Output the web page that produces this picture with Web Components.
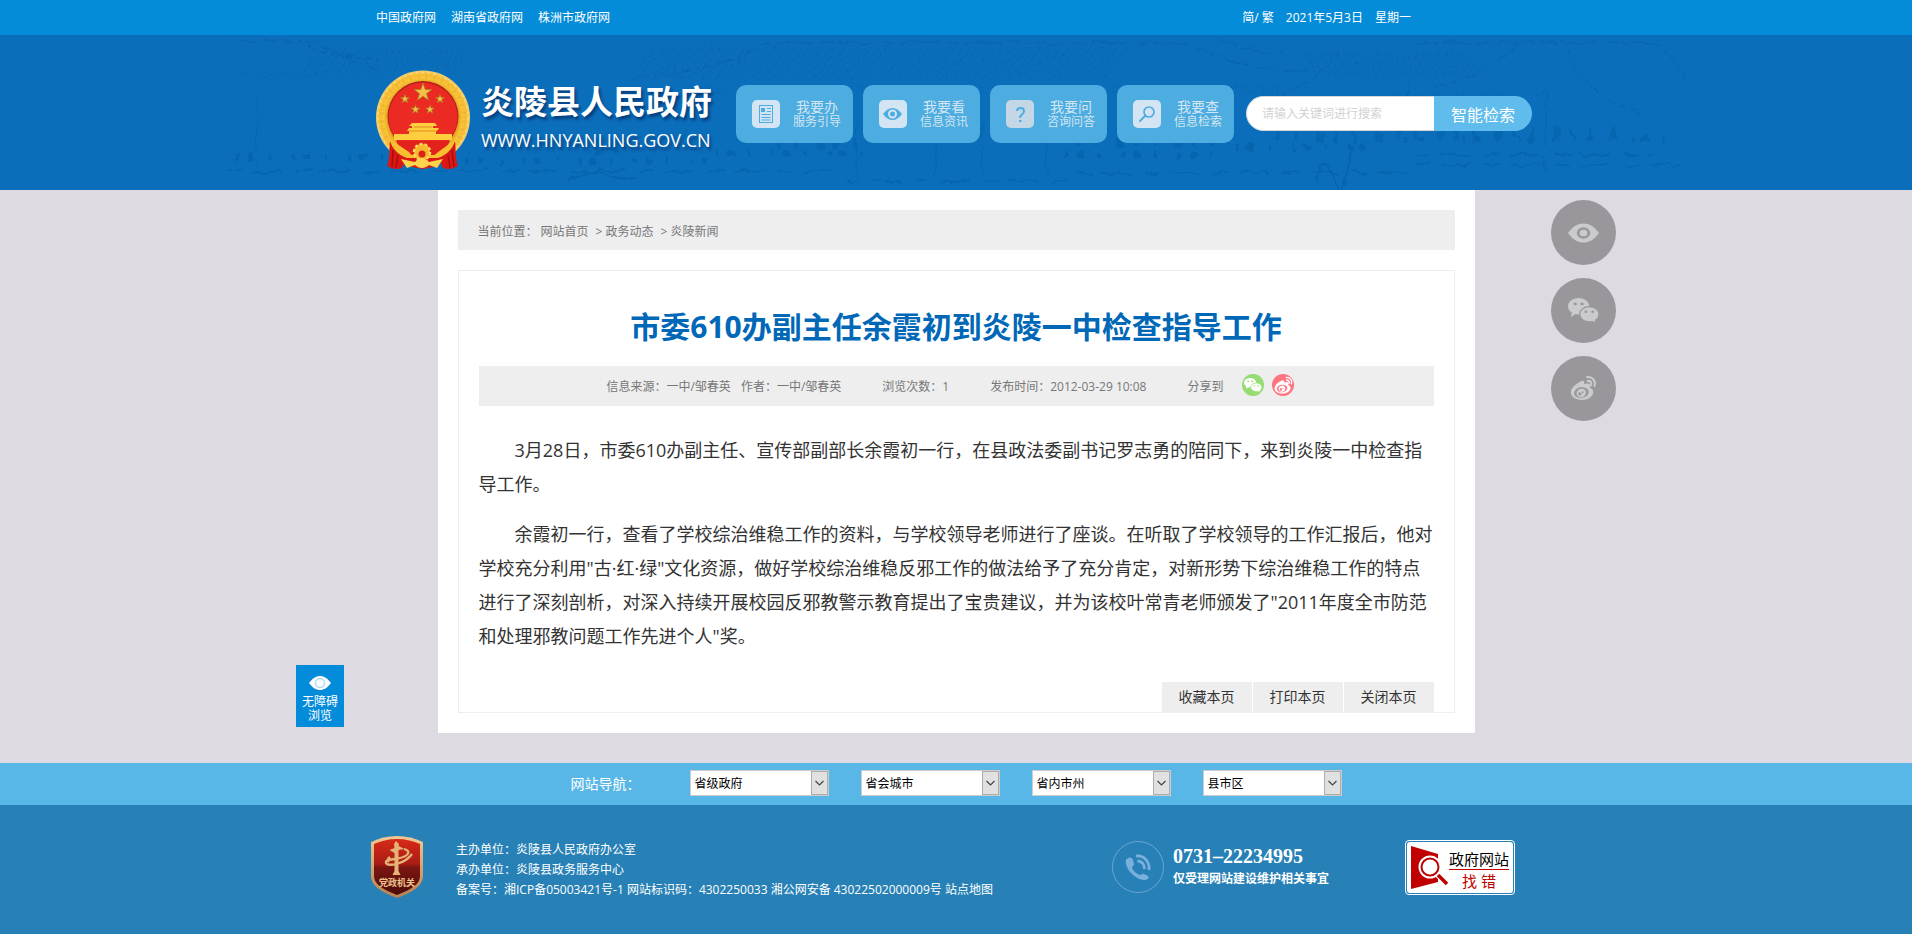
<!DOCTYPE html>
<html lang="zh-CN">
<head>
<meta charset="utf-8">
<meta name="viewport" content="width=device-width, initial-scale=1">
<title>市委610办副主任余霞初到炎陵一中检查指导工作</title>
<style>
:root { --wrap: 1160px; --sans: "Open Sans", "Noto Sans CJK SC", sans-serif; }
body {
  margin: 0; min-height: 100vh; display: flex; flex-direction: column;
  background: #dddbe1; color: #333;
  font: 12px/20px var(--sans); text-spacing-trim: space-all;
}
top-bar a { color: #fff; text-decoration: none; }
news-article p { margin: 0 0 16px; text-indent: 2em; }
</style>
</head>
<body>
<top-bar>
  <a href="#cn">中国政府网</a>
  <a href="#hn">湖南省政府网</a>
  <a href="#zz">株洲市政府网</a>
  <span slot="info"><a href="#s">简</a>/ <a href="#t">繁</a></span>
  <span slot="info">2021年5月3日</span>
  <span slot="info">星期一</span>
</top-bar>
<site-header>
  <site-logo slot="logo"></site-logo>
  <service-link icon="doc">我要办<span slot="sub">服务引导</span></service-link>
  <service-link icon="eye">我要看<span slot="sub">信息资讯</span></service-link>
  <service-link icon="ask">我要问<span slot="sub">咨询问答</span></service-link>
  <service-link icon="find">我要查<span slot="sub">信息检索</span></service-link>
  <site-search slot="search"></site-search>
</site-header>
<page-main>
  <crumb-trail slot="crumb"></crumb-trail>
  <news-article>
    <span slot="title">市委610办副主任余霞初到炎陵一中检查指导工作</span>
    <p>3月28日，市委610办副主任、宣传部副部长余霞初一行，在县政法委副书记罗志勇的陪同下，来到炎陵一中检查指导工作。</p>
    <p>余霞初一行，查看了学校综治维稳工作的资料，与学校领导老师进行了座谈。在听取了学校领导的工作汇报后，他对学校充分利用"古·红·绿"文化资源，做好学校综治维稳反邪工作的做法给予了充分肯定，对新形势下综治维稳工作的特点进行了深刻剖析，对深入持续开展校园反邪教警示教育提出了宝贵建议，并为该校叶常青老师颁发了"2011年度全市防范和处理邪教问题工作先进个人"奖。</p>
  </news-article>
</page-main>
<nav-strip>
  <nav-select label="省级政府"></nav-select>
  <nav-select label="省会城市"></nav-select>
  <nav-select label="省内市州"></nav-select>
  <nav-select label="县市区"></nav-select>
</nav-strip>
<site-footer></site-footer>
<float-tools></float-tools>
<access-tab></access-tab>

<script>
const base = `*{box-sizing:border-box} a{color:inherit;text-decoration:none} button{font:inherit;color:inherit;border:0;padding:0;margin:0;background:none;cursor:pointer} svg{display:block}`;
function element(name, html) {
  customElements.define(name, class extends HTMLElement {
    connectedCallback() {
      if (this.shadowRoot) return;
      const t = document.createElement('template');
      t.innerHTML = `<style>${base}</style>` + (typeof html === 'function' ? html(this) : html);
      this.attachShadow({ mode: 'open' }).append(t.content.cloneNode(true));
    }
  });
}
const star = (x, y, r) => {
  const p = [];
  for (let i = 0; i < 10; i++) {
    const a = -Math.PI / 2 + i * Math.PI / 5, q = i % 2 ? r * .39 : r;
    p.push((x + q * Math.cos(a)).toFixed(1) + ',' + (y + q * Math.sin(a)).toFixed(1));
  }
  return `<polygon points="${p.join(' ')}"/>`;
};
const eye = (fg, bg) => `<path fill="${fg}" d="M0 12C5 4 10 .5 16 .5S27 4 32 12c-5 8-10 11.500-16 11.500S5 20 0 12z"/><circle cx="16" cy="12" r="5.500" fill="${fg}" stroke="${bg}" stroke-width="3"/>`;
const wechat = (fg, bg) => `<path fill="${fg}" d="M11 0C4.900 0 0 4.800 0 10.600c0 3.200 1.500 6 4 7.900L3 24l4.600-3.600c1.100.3 2.200.5 3.400.5 6.100 0 11-4.500 11-10.300S17.100 0 11 0z"/><path fill="${fg}" stroke="${bg}" stroke-width="1.500" d="M22 11c-5.500 0-10 4.200-10 9.600s4.500 9.700 10 9.700c1.100 0 2.200-.2 3.200-.5l4 2.700-.9-4.200c2.200-1.700 3.700-4.500 3.700-7.700C32 15.200 27.500 11 22 11z"/><g fill="${bg}"><circle cx="7.500" cy="7.500" r="1.700"/><circle cx="14.500" cy="7.500" r="1.700"/><circle cx="18.500" cy="17.500" r="1.500"/><circle cx="25.500" cy="17.500" r="1.500"/></g>`;
const weibo = (fg, bg) => `<path fill="${fg}" d="M12 8c2-1.800 4.800-1.200 5 1.200 0 1-.3 1.800-.3 1.800 3.300-1.300 6.800-1.300 7.300 1.200.3 1.200-.3 2.200-.3 2.800 2.300.8 3.800 2.500 3.800 5 0 5.500-6.500 9.500-13.500 9.500S1 26 1 20.500C1 16 6.500 10.500 12 8z"/><ellipse cx="13.500" cy="20.800" rx="8.800" ry="6.300" transform="rotate(-9 13.500 20.800)" fill="${bg}"/><ellipse cx="13.300" cy="21.200" rx="5.600" ry="4.900" transform="rotate(-25 13.300 21.200)" fill="${fg}"/><circle cx="11.600" cy="22.400" r="2" fill="${bg}"/><circle cx="15" cy="20.300" r="1" fill="${bg}"/><path fill="none" stroke="${fg}" stroke-width="2.400" stroke-linecap="round" d="M20.500 2.500c6-.8 10.500 4.500 8.500 10.500M21 7c3-.4 5 2 4 5"/>`;

element('top-bar', `<style>
:host{display:block;background:#048cd8;color:#fff}
.wrap{max-width:var(--wrap);margin:0 auto;display:flex;justify-content:space-between;align-items:center;min-height:35px}
nav{display:flex;gap:15px} .info{display:flex;gap:12px;padding-right:125px}
</style><div class="wrap"><nav><slot></slot></nav><div class="info"><slot name="info"></slot></div></div>`);

/* faint line drawing of an old town behind the header */
const hatch = (x, y, n, w, h, s) => { let d = ''; for (let i = 0; i < n; i++) d += `M${x + i * w} ${y}l${s} ${h}`; return d; };
const skyline = `<svg class="town" viewBox="0 0 1520 155" aria-hidden="true"><filter id="rough" x="0" y="0" width="1" height="1"><feTurbulence type="fractalNoise" baseFrequency=".09" numOctaves="3" seed="4"/><feDisplacementMap in="SourceGraphic" scale="9" xChannelSelector="R" yChannelSelector="G"/></filter><g fill="none" stroke="#0a5ea3" stroke-width="1" filter="url(#rough)">
<path opacity=".4" stroke-dasharray="5 2" d="${hatch(100, 15, 26, 6, 22, -12)}${hatch(440, 12, 68, 7, 32, -24)}${hatch(1090, 18, 28, 6, 24, 12)}"/>
<path opacity=".6" stroke-dasharray="14 4 5 3 30 7" d="M20 6h80q30 22 62 18M90 10l70 24M420 42q90-6 130-34h420q60 30 120 28M1000 2q30 18 66 14M1040 68q60-16 80-48M1200 8h240q22 16 30 40M1220 52q60-16 80-42M1350 14q20 50 80 66"/>
<path opacity=".5" stroke-dasharray="2 3" d="M470 52h600M460 57h610M1180 60h150M20 40h180"/>
<path opacity=".4" stroke-width="2" stroke-dasharray="18 5 33 9" d="M640 86v58M720 86v62M766 86v62M830 86v58M1012 60v50M1192 48v40M1330 54v80M470 70v44M40 60v70"/>
<path opacity=".5" stroke-width="6" stroke-dasharray="3 8 7 15 2 21" d="M20 122h180M250 126h240M500 118h150M850 120h160M1020 112h140M1190 104h260"/>
<path opacity=".45" stroke-width="11" stroke-dasharray="4 14 3 19 9 9" d="M560 108h80M860 106h140M1060 102h110M1180 98h220"/>
<path opacity=".45" stroke-width="2" stroke-dasharray="16 9 30 14" d="M10 136h620M860 138h330M1200 130h270M1200 120h240M630 146h230"/>
<path opacity=".6" stroke-width="2" d="M350 146q20-12 40-6t30 2M380 120q14-14 22 0M1100 150q8-40 18-4t16-30"/>
</g></svg>`;
element('site-header', `<style>
:host{display:block;background:#0b6ebb;position:relative;overflow:hidden}
.town{position:absolute;left:50%;top:0;width:1520px;height:155px;margin-left:-740px}
.wrap{position:relative;max-width:var(--wrap);margin:0 auto;padding:35px 0 20px;display:flex;align-items:flex-start}
.logo{flex:0 0 360px} nav{display:flex;gap:10px;margin-top:15px} .search{margin:26px 0 0 12px}
</style>${skyline}<div class="wrap"><div class="logo"><slot name="logo"></slot></div><nav><slot></slot></nav><div class="search"><slot name="search"></slot></div></div>`);

element('site-logo', `<style>
:host{display:block;color:#fff} a{display:flex;gap:11px}
.txt{display:flex;flex-direction:column;padding-top:12px;gap:4px;text-shadow:2px 3px 3px rgba(0,30,80,.6);white-space:nowrap}
strong{font-size:33px;line-height:40px} span{font-size:18px;line-height:28px}
</style><a href="#home"><svg width="94" height="100" viewBox="0 0 94 100" aria-hidden="true">
<defs><radialGradient id="g" cx=".5" cy=".5" r=".5"><stop offset=".74" stop-color="#e09a1c"/><stop offset=".84" stop-color="#fbc93a"/><stop offset=".93" stop-color="#f7bd35"/><stop offset="1" stop-color="#f0d070"/></radialGradient><clipPath id="low"><path d="M0 0h94v72L80 84 62 95H32L14 84 0 72z"/></clipPath></defs>
<g clip-path="url(#low)"><circle cx="47" cy="47.500" r="47" fill="url(#g)"/>
<circle cx="47" cy="47.500" r="41" fill="none" stroke="#e6a62a" stroke-width="4" stroke-dasharray="1 2 3 2" opacity=".45"/>
<circle cx="47" cy="47.500" r="45" fill="none" stroke="#fde08a" stroke-width="1.500" stroke-dasharray="3 3" opacity=".7"/></g>
<circle cx="47" cy="46.500" r="35.500" fill="#b3201c"/><circle cx="47" cy="47" r="34.500" fill="#ec2a24"/>
<g fill="#f6c046" stroke="#a87a22" stroke-width=".7">${star(47, 22.5, 9.5)}${star(29, 29, 4.6)}${star(64, 29, 4.6)}${star(39.5, 39.5, 4.6)}${star(54, 39.5, 4.6)}</g>
<path fill="#ffce3e" d="M36 53h23l2 3h-4v2h6l-2 3h-1v3h16v6H18v-6h15v-3h-2l2-3h3v-2h-3z"/>
<path stroke="#e08a1c" d="M33 61h28M38 57h18" fill="none"/>
<path fill="#e3211d" d="M20 71h54l-4 7-10 7H34l-10-7z"/>
<path fill="#f9bf30" d="M15 70l18 12c2 3 4 4 7 4l7-5 7 5c4 0 6-2 8-4l17-12-5 12-16 9H35L20 81z"/>
<path fill="#d91715" d="M14 71c2 7 8 14 17 17l-5 10c-5 2-10 1-15-2 3-8 2-17 3-25zM79 71c-2 7-8 14-17 17l5 10c5 2 10 1 15-2-3-8-2-17-3-25z"/>
<path fill="none" stroke="#a50c0c" stroke-width="1.300" d="M17 80l-1 17M22 85l-2 13M76 80l2 17M72 85l2 13"/>
<path fill="#d91715" d="M28 88h37l-2 8-16 3-17-3z"/>
<circle cx="46" cy="82" r="8" fill="#f7b92c"/><circle cx="46" cy="82" r="8" fill="none" stroke="#ffda5c" stroke-width="2.500" stroke-dasharray="3 2"/><circle cx="46" cy="84" r="3.500" fill="#d8231b"/>
<path fill="#ffd34d" d="M25 89l14 3c4-5 10-5 14 0l14-3-6 9-8-3c-4 4-10 4-14 0l-8 3z"/>
</svg><div class="txt"><strong>炎陵县人民政府</strong><span>WWW.HNYANLING.GOV.CN</span></div></a>`);

const svc = {
  doc: `<rect x="7.500" y="5.500" width="13" height="17" fill="none" stroke="#4eade0"/><path stroke="#4eade0" fill="none" d="M15 8.500h4M15 11.500h4M9.500 14.500h9M9.500 17.500h9M9.500 20h9"/><path fill="#4eade0" d="M9 8h4v4H9z"/>`,
  eye: `<path fill="#4eade0" d="M4 14c3-4 6-6 9.500-6S20 10 23 14c-3 4-6 6-9.500 6S7 18 4 14z"/><circle cx="13.500" cy="14" r="3.500" fill="#4eade0" stroke="#d3e5f3" stroke-width="2"/>`,
  ask: `<path fill="none" stroke="#4eade0" stroke-width="2" d="M11 11q0-3 3.500-3t3.500 3q0 2-2 3.500t-2 3.500"/><path fill="#4eade0" d="M13 20h2.500v2H13z"/>`,
  find: `<circle cx="16" cy="12" r="5" fill="none" stroke="#4eade0" stroke-width="1.700"/><path stroke="#4eade0" stroke-width="2" stroke-linecap="round" d="M12.500 15.500L7 21"/>`
};
element('service-link', el => `<style>
:host{display:block;flex:0 0 117px}
a{display:flex;align-items:center;justify-content:space-between;height:58px;padding:0 12px 0 16px;border-radius:10px;background:#4eade0;color:#d3e5f3;text-align:center}
svg{background:${el.getAttribute('icon') === 'ask' ? '#c3d7e6' : '#d3e5f3'};border-radius:5px}
b{display:block;font-weight:400;font-size:14px;line-height:15px} span{display:block;font-size:12px;line-height:16px}
</style><a href="#${el.getAttribute('icon')}"><svg width="28" height="28" viewBox="0 0 28 28" aria-hidden="true">${svc[el.getAttribute('icon')]}</svg><div><b><slot></slot></b><span><slot name="sub"></slot></span></div></a>`);

element('site-search', `<style>
form{display:flex;width:286px;height:35px;border-radius:18px;overflow:hidden;background:#5fbcec}
input{flex:1;min-width:0;border:solid #d5d5d5;border-width:1px 0 1px 1px;border-radius:18px 0 0 18px;padding:0 15px;background:#fff;font:inherit;outline:0}
input::placeholder{color:#d2d2d2;opacity:1} button{flex:0 0 98px;color:#fff;font-size:16px;padding:2px 0 0}
</style><form onsubmit="return false"><input type="search" aria-label="搜索" placeholder="请输入关键词进行搜索"><button>智能检索</button></form>`);

element('page-main', `<style>
:host{display:block;margin-bottom:30px}
main{max-width:1037px;margin:0 auto;padding:20px;background:#fff;display:flex;flex-direction:column;gap:20px}
</style><main><slot name="crumb"></slot><slot></slot></main>`);

element('crumb-trail', `<style>
:host{display:block;background:#eee;color:#777} nav{display:flex;padding:12px 20px 8px;gap:7px} .home{margin-left:-4px}
</style><nav aria-label="当前位置"><span>当前位置：</span><a class="home" href="#index">网站首页</a><span>&gt; <a href="#zw">政务动态</a></span><span>&gt; <a href="#xw">炎陵新闻</a></span></nav>`);

element('news-article', `<style>
article{border:1px solid #eee;padding:0 20px}
h1{margin:0;padding:36px 0 19px;font-size:30px;line-height:40px;color:#0068b7;text-align:center}
.meta{display:flex;justify-content:center;align-items:center;min-height:40px;padding-right:4px;background:#eee;color:#777}
.meta span{margin-right:41px;padding-top:1px} .meta .src{margin-right:10px} .meta .to{margin-right:18px} .meta button{margin:0 8px 2px 0}
.body{padding-top:27px;font-size:18px;line-height:34px}
.acts{display:flex;justify-content:flex-end;gap:1px;margin-top:29px}
.acts button{width:90px;height:30px;background:#eee;font-size:14px;color:#333}
</style><article><h1><slot name="title"></slot></h1>
<div class="meta"><span class="src">信息来源：一中/邹春英</span><span>作者：一中/邹春英</span><span>浏览次数：1</span><span>发布时间：2012-03-29 10:08</span><span class="to">分享到</span>
<button aria-label="微信"><svg width="22" height="22" viewBox="0 0 22 22"><circle cx="11" cy="11" r="11" fill="#95dc73"/><g transform="translate(2 4) scale(.56 .45)">${wechat('#fff', '#95dc73')}</g></svg></button>
<button aria-label="微博"><svg width="22" height="22" viewBox="0 0 22 22"><circle cx="11" cy="11" r="11" fill="#ff7480"/><g transform="translate(2 2) scale(.6)">${weibo('#fff', '#ff7480')}</g></svg></button></div>
<div class="body"><slot></slot></div>
<div class="acts"><button>收藏本页</button><button>打印本页</button><button>关闭本页</button></div></article>`);

element('nav-strip', `<style>
:host{display:block;background:#58b7e6;color:#fff}
.wrap{max-width:771px;margin:0 auto;min-height:42px;display:flex;align-items:center;justify-content:space-between}
b{font-weight:400;font-size:14px} .list{display:flex;gap:32px;margin-bottom:2px}
</style><div class="wrap"><b>网站导航：</b><div class="list"><slot></slot></div></div>`);
element('nav-select', el => `<style>
:host{display:block;position:relative;width:139px}
select{appearance:none;width:100%;height:26px;padding:1px 20px 0 4px;border:1px solid #ccc;border-radius:0;background:#fff;color:#000;font:inherit;display:block}
svg{position:absolute;right:1px;top:1px;background:#e1e1e1;border:1px solid #adadad;pointer-events:none}
</style><select aria-label="${el.getAttribute('label')}"><option>${el.getAttribute('label')}</option></select><svg width="17" height="24" viewBox="0 0 15 22"><path d="M3.500 9l4 4 4-4" fill="none" stroke="#444" stroke-width="1.200"/></svg>`);

element('site-footer', `<style>
:host{display:block;flex:1;background:#2781b6;color:#fff}
.wrap{max-width:1172px;margin:0 auto;padding:30px 0 35px;display:flex;align-items:flex-start}
.org{margin:5px 0 0 32px;flex:1;white-space:nowrap} p{margin:0}
.tel{display:flex;gap:9px;margin:6px 76px 0 0} .tel b{display:block} .tel div{padding-top:5px}
.num{font:bold 20px/20px "Liberation Serif",serif} .note{line-height:26px}
.err{width:110px;height:55px;margin:5px 27px 0 0;border:1px solid #fff;border-radius:4px;padding:1px}
.err div{display:flex;height:51px;background:#fff;border-radius:3px;color:#000;padding-left:3px}
.err .t{display:block;padding:0;width:60px;text-align:center;font-size:15px}
.err b,.err i{display:block;font-weight:400;font-style:normal;line-height:20px;white-space:nowrap}
.err b{padding-top:7px;border-bottom:1px solid #c00000} .err i{color:#c00000;padding-top:1px}
</style><footer class="wrap">
<svg width="54" height="64" viewBox="0 0 54 64" role="img" aria-label="党政机关"><defs><linearGradient id="r" x2="0" y2="1"><stop offset="0" stop-color="#d82a18"/><stop offset=".45" stop-color="#a81c14"/><stop offset=".5" stop-color="#7c1612"/><stop offset="1" stop-color="#4a0c0a"/></linearGradient><linearGradient id="o" x2="0" y2="1"><stop offset="0" stop-color="#f0c993"/><stop offset="1" stop-color="#b97f50"/></linearGradient></defs>
<path fill="url(#o)" d="M27 1C18 1 9 3 1 7v34c0 10 10 16 26 22 16-6 26-12 26-22V7C45 3 36 1 27 1z"/><path fill="url(#r)" d="M27 4C18 4 11 6 4 9v32c0 8 8 13 23 19 15-6 23-11 23-19V9C43 6 36 4 27 4z"/>
<path fill="#e6b377" d="M24 9l2-3 3 3-.5 2 6 3-6 1v21l2 4h-8l2-4V18l-5-3 5-2z"/><path fill="none" stroke="#e6b377" stroke-width="2.300" d="M34 14c8 2 4 7-4 9-8 2-15 1-14 5 2 4 19 1 26-9M20 22c-2 1-3 3-1 5"/>
<text x="27" y="51" text-anchor="middle" font-size="9" font-weight="700" fill="#efc28c">党政机关</text></svg>
<div class="org"><p>主办单位：炎陵县人民政府办公室</p><p>承办单位：炎陵县政务服务中心</p><p>备案号：<a href="#icp">湘ICP备05003421号-1</a> 网站标识码：4302250033 <a href="#ga">湘公网安备 43022502000009号</a> <a href="#map">站点地图</a></p></div>
<div class="tel"><svg width="52" height="52" viewBox="0 0 52 52" aria-hidden="true"><circle cx="26" cy="26" r="25.500" fill="none" stroke="#69a6d2"/><path fill="#79b0dc" d="M14 19c2-3.500 6-3.500 7 0l1 4c0 2-2 2-2 4 2 4 5 6 8 7 2 0 2-2 4-1l4 2c2 2-1 4-4 4-5 0-10-4-14-8-3-4-5-9-4-12z"/><path fill="none" stroke="#79b0dc" stroke-width="2.800" d="M24 15c8-1 14 6 13 14M25.500 20c4.500 0 7 3.500 7 8"/></svg><div><b class="num">0731–22234995</b><b class="note">仅受理网站建设维护相关事宜</b></div></div>
<a class="err" href="#err"><div><svg width="39" height="51" viewBox="0 0 39 51" aria-hidden="true"><path fill="#c00000" d="M1 4l27 8v28L1 47z"/><circle cx="20" cy="25" r="11.500" fill="#fff"/><path stroke="#fff" stroke-width="6" d="M27 32l10 10"/><circle cx="20" cy="25" r="8.500" fill="#fff" stroke="#c00000" stroke-width="2"/><path stroke="#c00000" stroke-width="3.500" d="M28 33l9 9"/></svg><div class="t"><b>政府网站</b><i>找 错</i></div></div></a>
</footer>`);

element('float-tools', `<style>
:host{position:fixed;top:200px;left:calc(50% + 595px);display:flex;flex-direction:column;gap:13px}
button{width:65px;height:65px;border-radius:50%;background:#99979c;display:grid;place-items:center}
</style><button aria-label="浏览"><svg width="31" height="20" viewBox="0 0 32 24" preserveAspectRatio="none">${eye('#cbcbcd', '#99979c')}</svg></button><button aria-label="微信"><svg width="31" height="26" viewBox="0 0 32 33" preserveAspectRatio="none">${wechat('#cbcbcd', '#99979c')}</svg></button><button aria-label="微博"><svg width="29" height="27" viewBox="0 0 32 32">${weibo('#cbcbcd', '#99979c')}</svg></button>`);
element('access-tab', `<style>
:host{position:fixed;top:665px;left:calc(50% - 660px)}
a{display:flex;flex-direction:column;align-items:center;width:48px;height:62px;padding-top:11px;gap:5px;background:#048cdb;color:#fff;font-size:12px;line-height:14px;text-align:center}
</style><a href="#access"><svg width="22" height="14" viewBox="0 0 22 14" aria-hidden="true"><path fill="#fff" d="M0 7c4-5 7-7 11-7s7 2 11 7c-4 5-7 7-11 7S4 12 0 7z"/><circle cx="11" cy="7" r="4.500" fill="#fff" stroke="#b5dcf5" stroke-width="1.500"/></svg><span>无障碍<br>浏览</span></a>`);
</script>
</body>
</html>
